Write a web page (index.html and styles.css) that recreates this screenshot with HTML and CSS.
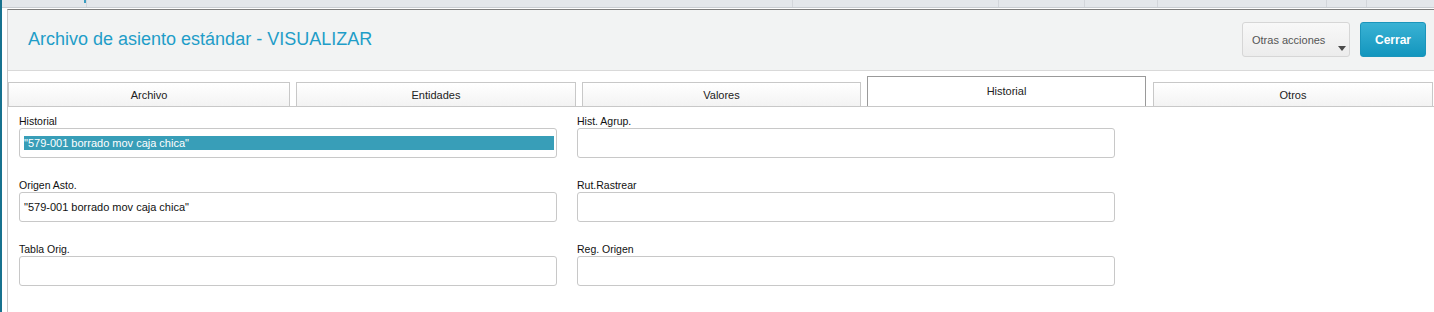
FILE: index.html
```html
<!DOCTYPE html>
<html lang="es">
<head>
    <meta charset="UTF-8">
    <title>Archivo de asiento estándar - VISUALIZAR</title>
    <link rel="stylesheet" href="styles.css">
</head>
<body>
    <div class="rail"></div>

    <div class="app">
        <!-- barra superior (pestañas del sistema, recortadas) -->
        <div class="topbar">
            <span class="seg s1"></span>
            <span class="tick"></span>
            <span class="seg sep s2"></span>
            <span class="seg sep s3"></span>
            <span class="seg sep s4"></span>
            <span class="seg sep s5"></span>
            <span class="seg sep s6"></span>
            <span class="seg sep s7"></span>
            <span class="seg sep rest"></span>
        </div>

        <div class="window">
            <div class="header">
                <h1 class="title">Archivo de asiento estándar - VISUALIZAR</h1>
                <div class="actions">
                    <button class="btn btn-more">Otras acciones</button>
                    <button class="btn btn-close">Cerrar</button>
                </div>
            </div>

            <div class="tabs">
                <div class="tab">Archivo</div>
                <div class="tab">Entidades</div>
                <div class="tab">Valores</div>
                <div class="tab active">Historial</div>
                <div class="tab">Otros</div>
            </div>

            <div class="panel">
                <div class="field">
                    <label>Historial</label>
                    <div class="input"><span class="selected">"579-001 borrado mov caja chica"</span></div>
                </div>
                <div class="field">
                    <label>Hist. Agrup.</label>
                    <div class="input"></div>
                </div>
                <div class="field">
                    <label>Origen Asto.</label>
                    <div class="input"><span class="value">"579-001 borrado mov caja chica"</span></div>
                </div>
                <div class="field">
                    <label>Rut.Rastrear</label>
                    <div class="input"></div>
                </div>
                <div class="field">
                    <label>Tabla Orig.</label>
                    <div class="input"></div>
                </div>
                <div class="field">
                    <label>Reg. Origen</label>
                    <div class="input"></div>
                </div>
            </div>
        </div>
    </div>
</body>
</html>
```

FILE: styles.css
```css
* {
    box-sizing: border-box;
}
html, body {
    height: 100%;
}
body {
    margin: 0;
    display: flex;
    font-family: "Liberation Sans", Arial, sans-serif;
    background: #fff;
    color: #222;
    overflow: hidden;
}
.rail {
    width: 2px;
    flex: 0 0 2px;
    background-color: #17728f;
}
.app {
    flex: 1;
    display: flex;
    flex-direction: column;
    min-width: 0;
}
.topbar {
    height: 8px;
    display: flex;
    align-items: flex-start;
    background-color: #e4e7eb;
    border-bottom: 1px solid #c9cdd2;
}
.seg {
    height: 7px;
}
.seg.sep {
    border-left: 1px solid #d3d6db;
}
.s1 { width: 82px; }
.s2 { width: 706px; }
.s3 { width: 206px; }
.s4 { width: 86px; }
.s5 { width: 73px; }
.s6 { width: 169px; }
.s7 { width: 40px; }
.rest { flex: 1; }
.tick {
    width: 2px;
    height: 3px;
    background-color: #3a9cc0;
}
.window {
    flex: 1;
    margin-top: 1px;
    margin-left: 5px;
    border-left: 1px solid #c8c8c8;
    border-top: 1px solid #7d7d7d;
}
.header {
    height: 61px;
    display: flex;
    align-items: center;
    justify-content: space-between;
    padding: 0 8px 1px 20px;
    background-color: #f2f3f3;
    border-bottom: 1px solid #d9d9d9;
}
.title {
    margin: 0;
    font-size: 18px;
    font-weight: normal;
    color: #1f9dc8;
}
.actions {
    display: flex;
    gap: 10px;
}
.btn {
    height: 35px;
    border-radius: 3px;
    font-family: "Liberation Sans", Arial, sans-serif;
    cursor: pointer;
}
.btn-more {
    position: relative;
    width: 108px;
    padding: 0 0 0 9px;
    text-align: left;
    font-size: 11px;
    color: #555;
    border: 1px solid #d6d6d6;
    background: linear-gradient(#f8f8f8, #ececec);
}
.btn-more::after {
    content: "";
    position: absolute;
    right: 3px;
    bottom: 5px;
    border-left: 4.5px solid transparent;
    border-right: 4.5px solid transparent;
    border-top: 5px solid #4a4a4a;
}
.btn-close {
    width: 66px;
    font-size: 12px;
    font-weight: bold;
    color: #fff;
    border: 1px solid #1b95bb;
    background: linear-gradient(#3ab2d4, #1396be);
}
.tabs {
    height: 35px;
    display: flex;
    align-items: flex-end;
    gap: 6px;
}
.tab {
    flex: 0 0 280px;
    height: 24px;
    display: flex;
    align-items: center;
    justify-content: center;
    font-size: 11px;
    color: #222;
    border: 1px solid #c8c8c8;
    border-bottom: none;
    background: linear-gradient(#ffffff, #f3f3f3);
}
.tab:first-child {
    flex-basis: 282px;
}
.tab:nth-child(3),
.tab:nth-child(4) {
    flex-basis: 279px;
}
.tab:last-child {
    margin-left: 1px;
}
.tab.active {
    height: 30px;
    padding-bottom: 2px;
    border-color: #9a9a9a;
    background: #fff;
}
.panel {
    border-top: 1px solid #c8c8c8;
    padding: 8px 0 0 11px;
    display: grid;
    grid-template-columns: 538px 538px;
    column-gap: 20px;
    row-gap: 21px;
}
.field label {
    display: block;
    font-size: 10.5px;
    line-height: 13px;
    color: #111;
}
.input {
    height: 30px;
    border: 1px solid #c8c8c8;
    border-radius: 3px;
    display: flex;
    align-items: center;
    padding: 0 2px 0 4px;
    font-size: 11px;
    color: #111;
}
.selected {
    flex: 1;
    line-height: 14px;
    background-color: #389eb8;
    color: #fff;
}
```
